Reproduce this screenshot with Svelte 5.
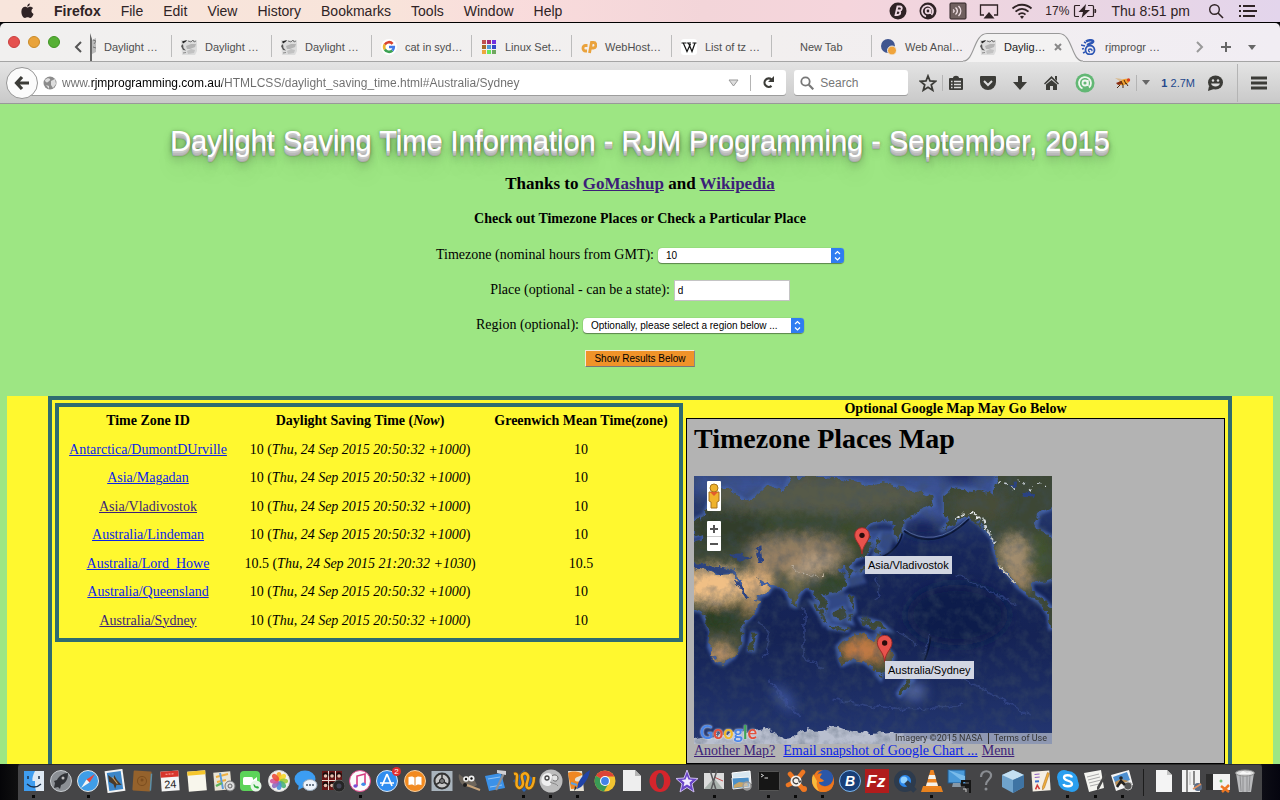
<script>
  const menus = ['File', 'Edit', 'View', 'History', 'Bookmarks', 'Tools', 'Window', 'Help'];

  const scribble = '<path d="M0 1h16v11l-2 4H1z" fill="#dcdcdc"/><path d="M1 2.500l5-1.500-1 1.500L2 4.500z" fill="#222"/><path d="M0 7l2-2 .5 4L5 11.500 2 11z" fill="#555"/><path d="M7 2l3 1 2-2 1 2 2-1" stroke="#777" fill="none"/><path d="M5 7l5-2 5 0-1 3-5 2-3 0z" fill="#b4b4b4"/><path d="M6 12l4-2 4 1-1 3-6 1z" fill="#c2c2c2"/><path d="M2 14l3-.5" stroke="#888"/>';
  const art = {
    scribble,
    google: '<circle cx="8" cy="8" r="8" fill="#fff"/><g fill="none" stroke-width="2.6"><path d="M3.8 5.6A4.8 4.8 0 0 1 11.6 4.8" stroke="#d8432f"/><path d="M3.9 10.5a4.8 4.8 0 0 1-.1-5" stroke="#edb42e"/><path d="M11.4 11.5a4.8 4.8 0 0 1-7.5-1" stroke="#3da253"/><path d="M8 8h4.8a4.8 4.8 0 0 1-1.4 3.5" stroke="#4379e8"/></g>',
    linux: '<path d="M1 1h4v4H1z" fill="#c0504d"/><path d="M6 1h4v4H6z" fill="#a22c74"/><path d="M11 1h4v4h-4z" fill="#7030e0"/><path d="M1 6h4v4H1z" fill="#a56a24"/><path d="M6 6h4v4H6z" fill="#4a98d8"/><path d="M11 6h4v4h-4z" fill="#3548c8"/><path d="M1 11h4v4H1z" fill="#eda63c"/><path d="M6 11h4v4H6z" fill="#66e85c"/><path d="M11 11h4v4h-4z" fill="#70a860"/>',
    cpanel: '<g fill="none" stroke="#eaa23c" stroke-width="2.8"><path d="M6.500 6.500H4.500a2.500 2.700 0 0 0 0 5.500H6"/><path d="M8.500 14L10.500 3.500H12.500a2.200 2.600 0 0 1 0 5.500h-2.500"/></g>',
    wiki: '<rect width="16" height="16" rx="3" fill="#fff"/><path d="M.5 4h4.500M5.500 4h4.500M11.500 4H15.500" stroke="#111"/><path d="M2.300 4l3.700 8.500L9.500 5M7.500 4l3.500 8.500L14 4" fill="none" stroke="#111" stroke-width="1.200"/>',
    piwik: '<circle cx="7" cy="7" r="7" fill="#40558f"/><circle cx="11" cy="11.500" r="4.500" fill="#f0a43c" stroke="#eee"/>',
    dragon: '<g fill="none" stroke="#2c55b4"><path d="M5 2.500c3-2 8-1.500 7 .5s-5 1-5.500 3.500" stroke-width="2.500"/><circle cx="9" cy="11" r="4.500" stroke-width="1.800"/><path d="M9 13c-2-.5-2-3 0-3s2.500 1.500 1.500 2" stroke-width="1.300"/><path d="M0 6l4 1M1 10l2-.5M2 14l2-1M3 3l2 1" stroke-width="1.500"/></g>'
  };

  const tabs = [
    { title: 'Daylight …', icon: 'scribble' },
    { title: 'Daylight …', icon: 'scribble' },
    { title: 'Daylight …', icon: 'scribble' },
    { title: 'cat in syd…', icon: 'google' },
    { title: 'Linux Set…', icon: 'linux' },
    { title: 'WebHost…', icon: 'cpanel' },
    { title: 'List of tz …', icon: 'wiki' },
    { title: 'New Tab', icon: null },
    { title: 'Web Anal…', icon: 'piwik' },
    { title: 'Daylig…', icon: 'scribble', active: true },
    { title: 'rjmprogr …', icon: 'dragon' }
  ];

  const zones = [
    { id: 'Antarctica/DumontDUrville', offset: '10', now: 'Thu, 24 Sep 2015 20:50:32 +1000' },
    { id: 'Asia/Magadan', offset: '10', now: 'Thu, 24 Sep 2015 20:50:32 +1000' },
    { id: 'Asia/Vladivostok', offset: '10', now: 'Thu, 24 Sep 2015 20:50:32 +1000', visited: true },
    { id: 'Australia/Lindeman', offset: '10', now: 'Thu, 24 Sep 2015 20:50:32 +1000' },
    { id: 'Australia/Lord_Howe', offset: '10.5', now: 'Thu, 24 Sep 2015 21:20:32 +1030' },
    { id: 'Australia/Queensland', offset: '10', now: 'Thu, 24 Sep 2015 20:50:32 +1000' },
    { id: 'Australia/Sydney', offset: '10', now: 'Thu, 24 Sep 2015 20:50:32 +1000', visited: true }
  ];

  const disc = (fill, ring = '#ddd') => `<circle cx="12" cy="12" r="10.500" fill="${fill}" stroke="${ring}"/>`;
  const petals = ['#f6a623', '#f5d72a', '#9ccb3b', '#4bb37a', '#4a90d9', '#8e6cc0', '#d4569a', '#ec4f3c']
    .map((c, i) => `<ellipse cx="12" cy="7.200" rx="2.600" ry="4.300" fill="${c}" opacity=".9" transform="rotate(${i * 45} 12 12)"/>`)
    .join('');

  const apps = [
    { run: true, art: '<rect x="2" y="2" width="20" height="20" fill="#dfe9f3"/><path d="M2 2h11c-2 4-3 7-2.500 10H13c0 4 0 7 1 10H2z" fill="#3f9df0"/><path d="M6 7v3M17 7v3" stroke="#1b2f4a" stroke-width="1.500"/><path d="M5 15c4 4 10 4 14 0" fill="none" stroke="#1b2f4a" stroke-width="1.300"/>' },
    { art: disc('#8b8f94', '#c8ccd0') + '<path d="M19 4c-5 0-9 3-11 7l-3 1 1 2-1 5 4-1 2 2 1-4c5-2 7-6 7-12z" fill="#303236"/><circle cx="14" cy="9" r="1.500" fill="#bbb"/>' },
    { run: true, art: disc('#3f9ee8', '#e6e6e6') + '<path d="M19 5l-5.500 8.500-3-3z" fill="#e8453c"/><path d="M5 19l5.500-8.500 3 3z" fill="#f4f4f4"/>' },
    { art: '<g transform="rotate(-8 12 12)"><rect x="3" y="1" width="18" height="22" fill="#f3f3f3"/><rect x="5" y="3" width="14" height="18" fill="#3c86c8"/><path d="M6 5l5 5 1-4 2 5 4 6-5-1-2 4-1-5-4-3z" fill="#4a3a2a"/><path d="M10 8l4 7" stroke="#d8a860"/></g>' },
    { art: '<g transform="rotate(4 12 12)"><rect x="3" y="2" width="18" height="20" rx="1" fill="#95622c"/><path d="M21 4v17" stroke="#5c8fa8" stroke-width="1.500"/><circle cx="12" cy="12" r="4.500" fill="none" stroke="#7c4d1e"/><circle cx="12" cy="11" r="1.500" fill="#7c4d1e"/></g>' },
    { art: '<g transform="rotate(-4 12 12)"><rect x="3" y="2" width="18" height="20" fill="#f5f5f5"/><path d="M3 2h18v6H3z" fill="#d8352c"/><path d="M8 5h8" stroke="#ffb0a8" stroke-dasharray="2 1"/><text x="12" y="19" font-size="11" font-family="Liberation Sans, sans-serif" text-anchor="middle" fill="#222">24</text></g>' },
    { art: '<g transform="rotate(-5 12 12)"><rect x="3" y="2" width="18" height="20" fill="#f8f6ec"/><path d="M3 2h18v4H3z" fill="#f6c62c"/></g>' },
    { art: '<rect x="2" y="3" width="17" height="18" fill="#e9e4d4" transform="rotate(-5 11 12)"/><path d="M4 8l12-3M5 13l9-2" stroke="#f0b040" stroke-width="2"/><path d="M8 4l3 16" stroke="#5b9de0" stroke-width="2"/><path d="M4 17l6-3" stroke="#61b45c" stroke-width="2.500"/><circle cx="18" cy="17" r="5" fill="#ddd" stroke="#777"/><circle cx="18" cy="17" r="2" fill="none" stroke="#666"/>' },
    { art: '<rect x="1" y="2" width="20" height="20" rx="4" fill="#5cd35a"/><rect x="4" y="8" width="10" height="8" rx="1.500" fill="#fff"/><path d="M14 11l4-3v8l-4-3z" fill="#fff"/><circle cx="17" cy="17" r="5.500" fill="#e8f6e8"/><path d="M14.500 15c0 3 2 5 5 4.500l.5-1.500-2-1-1 .5-1.500-2z" fill="#2fae3c"/>' },
    { art: disc('#f4f2ee', '#d8d8d8') + petals },
    { art: '<ellipse cx="11" cy="10" rx="10.500" ry="8.500" fill="#3c9df2"/><path d="M5 15l-1 6 6-3z" fill="#3c9df2"/><ellipse cx="16" cy="16" rx="7" ry="5.500" fill="#eef4fb" stroke="#9ab"/><circle cx="13" cy="16" r="1" fill="#456"/><circle cx="16" cy="16" r="1" fill="#456"/><circle cx="19" cy="16" r="1" fill="#456"/>' },
    { art: '<rect x="1" y="2" width="20" height="19" fill="#6a1616"/><path d="M1 11.500h20M7.500 2v19M14.500 2v19" stroke="#e8d8d0"/><g fill="#1c0c0c"><circle cx="4.500" cy="6" r="2.800"/><circle cx="11" cy="6" r="2.800"/><circle cx="18" cy="6" r="2.800"/><circle cx="4.500" cy="15.500" r="2.800"/><circle cx="11" cy="15.500" r="2.800"/></g><g fill="#eabfae"><circle cx="4.500" cy="7" r="1.800"/><circle cx="11" cy="7" r="1.800"/><circle cx="18" cy="7" r="1.800"/><circle cx="4.500" cy="16.500" r="1.800"/><circle cx="11" cy="16.500" r="1.800"/></g><circle cx="18" cy="17" r="6" fill="#252525" stroke="#555"/><circle cx="18" cy="17" r="2.500" fill="#445"/>' },
    { run: true, art: disc('#fafafa', '#e04a8c') + '<path d="M9 17V7l8-2v10" fill="none" stroke="#d63a80" stroke-width="1.600"/><ellipse cx="7.500" cy="17" rx="2.200" ry="1.700" fill="#7a4fd8"/><ellipse cx="15.500" cy="15.200" rx="2.200" ry="1.700" fill="#3f8be8"/>' },
    { badge: '2', art: disc('#2f8df0', '#d6e6f6') + '<path d="M12 5L7 17M12 5l5 12M5 14h14" stroke="#fff" stroke-width="1.700" fill="none"/>' },
    { art: disc('#f28a20', '#f8d0a0') + '<path d="M5.500 8c3-1 5-.5 6.500 1 1.500-1.500 3.500-2 6.500-1v8c-3-1-5-.5-6.500 1-1.500-1.500-3.500-2-6.500-1z" fill="#fff"/><path d="M12 9v8" stroke="#e08020"/>' },
    { art: '<rect x="1.500" y="2" width="21" height="20" fill="#a9b4bd"/><circle cx="12" cy="12" r="7.500" fill="#c8c8c8" stroke="#333" stroke-width="2"/><path d="M12 12V5M12 12l6 3.500M12 12l-6 3.500" stroke="#333" stroke-width="1.500"/><circle cx="12" cy="12" r="2.500" fill="#777" stroke="#222"/>' },
    { art: '<path d="M2 5l5 4c3-3 8-2 10 1l3 6c-4 3-12 3-14 0-3-2-5-7-4-11z" fill="#6e665c"/><circle cx="9" cy="10" r="2.800" fill="#f2f2f2"/><circle cx="14.500" cy="9.500" r="3" fill="#f2f2f2"/><circle cx="9" cy="10" r="1.200" fill="#111"/><circle cx="14.500" cy="9.500" r="1.200" fill="#111"/><path d="M10 16l13 5" stroke="#c6a37a" stroke-width="2"/><circle cx="8" cy="16" r="2" fill="#1c1c1c"/>' },
    { art: '<path d="M1 7l16-3 4 15-16 3z" fill="#3b91e8"/><path d="M4 10l12-2M6 18l12-2" stroke="#a8d0f8" stroke-width=".8"/><path d="M20 4L12 21" stroke="#8f8f92" stroke-width="2.200"/><path d="M13 1l9 1v4l-9-2z" fill="#d0d0d4"/>' },
    { run: true, art: '<path d="M12 1l11 11-11 11L1 12z" fill="#2a67b8"/><path d="M2 5c6-2 1 8 3 12s6 1 6-3-3-7 0-9 6 1 5 5-3 8 0 9 6-3 6-11" fill="none" stroke="#7a5010" stroke-width="3.800"/><path d="M2 5c6-2 1 8 3 12s6 1 6-3-3-7 0-9 6 1 5 5-3 8 0 9 6-3 6-11" fill="none" stroke="#f5a91c" stroke-width="2.500"/>' },
    { run: true, art: '<circle cx="12" cy="12" r="11.500" fill="#bdbdbd"/><path d="M3 8c2-5 10-5 10-1s-2 4-1 7-4 4-7 2-3-5-2-8z" fill="#f0f0f0"/><circle cx="8" cy="9" r="2" fill="none" stroke="#444" stroke-width="1.300"/><path d="M13 7c2-2 6-1 6 2s-3 4-5 2" fill="#e4e4e4" stroke="#666"/><path d="M11 13c3 2 6 1 8 4" fill="none" stroke="#888"/>' },
    { run: true, art: '<path d="M2 2h14l2 20H4z" fill="#e6e0d2"/><path d="M2 4c5-3 13-1 14 1s-6 2-7 5 4 3 6 2-1 8-10 8z" fill="#ee8722"/><path d="M5 14l6 2" stroke="#5ca0e0" stroke-width="2"/><path d="M24 1c-1 8-5 13-9 17l-4 2 1-5c2-6 7-11 12-14z" fill="#2144a8"/><path d="M11 19l-3 3 1-5z" fill="#333"/>' },
    { art: '<circle cx="12" cy="12" r="10.500" fill="#f2c331"/><path d="M12 12L2.900 6.800A10.500 10.500 0 0 1 21.300 7.500H12z" fill="#dc4437"/><path d="M12 12L2.900 6.800a10.500 10.500 0 0 0 8 15.600l4.600-8z" fill="#3a9b56"/><circle cx="12" cy="12" r="5" fill="#fff"/><circle cx="12" cy="12" r="3.900" fill="#4382e8"/>' },
    { art: '<path d="M3 1h12l6 6v15H3z" fill="#eee"/><path d="M15 1l6 6h-6z" fill="#b5b5b5"/>' },
    { art: '<ellipse cx="12" cy="12" rx="10.500" ry="11" fill="#d5252c"/><ellipse cx="12" cy="12" rx="4" ry="8" fill="#45464a"/>' },
    { art: '<path d="M12 1l3 8 8 .5-6 5.500 2 8-7-4.500L5 23l2-8-6-5.500L9 9z" fill="#6a45c8" stroke="#cdbcf0"/><path d="M12 7l1.500 3.500 4 .5-3 2.500 1 4-3.500-2-3.500 2 1-4-3-2.500 4-.5z" fill="#efe8ff"/>' },
    { run: true, art: '<rect x="2" y="4" width="20" height="16" fill="#dcdcdc"/><path d="M2 20L12 9l9 11z" fill="#aab3ae"/><path d="M12 8l9 4" stroke="#c75050"/><path d="M8 1l6 20M15 1L9 21" stroke="#58585a" stroke-width="1.500"/>' },
    { art: '<path d="M3 4l18-2 1 13-17 3z" fill="#d8e6ef" stroke="#fff"/><path d="M3 9l17-1 1 10-17 2z" fill="#4b90c8" stroke="#f6f6f6"/><path d="M5 16l5-3 8 1 1 3-14 2z" fill="#c8a668"/><circle cx="18" cy="17" r="4" fill="#ccc9" stroke="#9a9a9a" stroke-width="1.500"/>' },
    { run: true, art: '<rect x="1.500" y="2.500" width="21" height="19" rx="1" fill="#161616" stroke="#555"/><path d="M4 5l2.500 1.500L4 8M7.500 9H11" fill="none" stroke="#ddd"/>' },
    { run: true, art: '<g stroke="#ee7722" stroke-linecap="round"><path d="M12 12L19 3M12 12l-8 4M12 12l7 8M12 12L6 5" stroke-width="4.500"/></g><circle cx="20" cy="20" r="3" fill="#ee7722"/><circle cx="12" cy="12" r="5.500" fill="#f5f0ea"/><path d="M14 14a3 3 0 1 1 1-2c0 2 2 1 1.500-.5" fill="none" stroke="#444" stroke-width="1.300"/>' },
    { run: true, art: '<circle cx="12" cy="12" r="11" fill="#e9701d"/><circle cx="14" cy="9" r="8.200" fill="#2a57a8"/><path d="M8 1c-3 1-4 3-4 5L1 8c-1 7 4 15 11 15 8 0 11-5 11-12-1 4-4 7-8 7-4 0-7-2-7-5 1 0 4 0 5-1-1-2-3-2-4-3 0-2 1-3 2-4-2-1-4 0-5 1 0-2 1-4 2-5z" fill="#ee7a1e"/><path d="M2 5l-1 6c0 5 3 9 7 11-2-3-3-7-2-10z" fill="#f8bb3c"/>' },
    { art: disc('#173f78', '#7db6ee') + '<text x="12" y="17" font-size="14" font-weight="bold" font-style="italic" font-family="Liberation Sans, sans-serif" text-anchor="middle" fill="#fff">B</text>' },
    { art: '<rect x="0" y="0" width="24" height="24" fill="#b01c1c"/><text x="11" y="18" font-size="17" font-weight="bold" font-style="italic" font-family="Liberation Sans, sans-serif" text-anchor="middle" fill="#fff">Fz</text>' },
    { art: '<circle cx="12" cy="12" r="8.500" fill="#2a86ea" stroke="#2d3b4d" stroke-width="5"/><circle cx="11" cy="11" r="3.500" fill="#8fd0ff"/><path d="M13 13l9 9" stroke="#2d3b4d" stroke-width="5"/>' },
    { run: true, art: '<path d="M3 17h18l2 6H1z" fill="#e8821e"/><path d="M10.500 1h3l5 18h-13z" fill="#ef8420"/><path d="M9 6h6l1 4H8zM7 13.500h10l1 3.500H6z" fill="#f4f1ea"/>' },
    { art: '<rect x="1" y="1" width="17" height="13" fill="#4b9ad8" stroke="#20588c"/><path d="M1 1l17 6v7z" fill="#79bbea"/><path d="M6 14h7l1 4H5z" fill="#8898a6"/><path d="M15 12h8v4h-8zM18 18h5v6" fill="none" stroke="#161616" stroke-width="2"/><path d="M16 20h3v3" fill="none" stroke="#ccc"/>' },
    { art: '<path d="M7 8c0-8 11-7 10-1-.6 4-5 4-5 9" fill="none" stroke="#8a8d92" stroke-width="2.200"/><circle cx="12" cy="20" r="1.500" fill="#8a8d92"/>' },
    { art: '<path d="M12 1l11 5v12l-11 6-11-6V6z" fill="#6fa3cc"/><path d="M12 1l11 5-11 5L1 6z" fill="#c4e0f2"/><path d="M12 11v13l11-6V6z" fill="#3f74a4"/>' },
    { art: '<g transform="rotate(-4 12 12)"><rect x="3" y="2" width="18" height="20" fill="#f4efe4"/><path d="M6 5h5M6 8h5" stroke="#8b5cc0"/><path d="M6 12h4" stroke="#3b6fd0" stroke-width="2"/><path d="M6 20l2-4 2 4" fill="none" stroke="#d03838" stroke-width="1.500"/><path d="M21 5l-6 14-2 2v-3l6-14z" fill="#efae3c" stroke="#a86b1c" stroke-width=".5"/></g>' },
    { run: true, art: '<circle cx="8" cy="8" r="7" fill="#2a9ff0"/><circle cx="16" cy="16" r="7" fill="#2a9ff0"/><circle cx="12" cy="12" r="10" fill="#2a9ff0"/><path d="M16 8.500c-1-3-8-3-8 0 0 4 8 2.500 8 6.500 0 3-8 3-8.500 0" fill="none" stroke="#fff" stroke-width="2.300"/>' },
    { run: true, art: '<path d="M1 4l17-3 3 18-15 4z" fill="#f4f4f0"/><path d="M4 8l12-3M5 11l12-3M6 14l12-3M7 17l9-2" stroke="#aaa"/><path d="M24 5l-8 15-2 1v-3l8-14z" fill="#4a4a4a"/>' },
    { run: true, art: '<path d="M1 6l18-5 4 15-17 6z" fill="#f4f4f4"/><path d="M3 8l14-5 3 8-14 5z" fill="#4d8fd0"/><path d="M5 13l6-3 4 1 4 1-13 5z" fill="#b98f58"/><circle cx="18" cy="17" r="4" fill="#555" stroke="#bbb"/><path d="M7 18l4-6 4 4" stroke="#222" stroke-width="2.500" fill="none"/><circle cx="11" cy="9" r="1.800" fill="#222"/>' }
  ];

  const stacks = [
    { art: '<path d="M4 1h11l5 5v17H4z" fill="#f4f4f4"/><path d="M15 1l5 5h-5z" fill="#c4c4c4"/>' },
    { art: '<rect x="3" y="1" width="18" height="22" fill="#f2f2f2"/><path d="M8 1v22M15 2v14" stroke="#888" stroke-width="2"/><path d="M11 3v13" stroke="#bbb"/><circle cx="19" cy="18" r="4" fill="#5a6c86"/><path d="M14 20l8-5" stroke="#e0905c" stroke-width="1.500"/>' },
    { art: '<rect x="0" y="5" width="24" height="16" fill="#f2f2f2"/><path d="M0 5h7v16H0z" fill="#2c2c2c"/><circle cx="15" cy="12" r="1.500" fill="#6fbf6f"/><path d="M15 17l8 6M23 16l-7 7" stroke="#ee7722" stroke-width="2.500"/>' },
    { art: '<path d="M3 4h18l-3 19H6z" fill="#b9babc"/><ellipse cx="12" cy="4" rx="9.500" ry="3" fill="#dedede" stroke="#8a8a8a"/><path d="M7 6l1 16M10 7v16M14 7v16M17 6l-1 16" stroke="#8f9092"/><path d="M6 5l4-3 4 2 3-1 1 2z" fill="#f8f8f8"/>' }
  ];

  let timezone = $state('10');
  let place = $state('d');
  let region = $state('');
  let address = $state('www.rjmprogramming.com.au/HTMLCSS/daylight_saving_time.html#Australia/Sydney');
</script>

{#snippet arrows()}
  <svg class="arrows" viewBox="0 0 13 15" aria-hidden="true">
    <rect width="13" height="15" rx="3" fill="#2f7df2" /><path d="M0 0h5v15H0z" fill="#2f7df2" />
    <path d="M4 6l2.500-2.500L9 6M4 9.500L6.500 12 9 9.500" fill="none" stroke="#fff" stroke-width="1.200" />
  </svg>
{/snippet}

{#snippet pin(x, y)}
  <g transform="translate({x} {y})">
    <path d="M0 0C-3-30-22-38-22-57a22 22 0 0 1 44 0C22-38 3-30 0 0z" fill="#e8524c" stroke="#9c2b28" stroke-width="3" />
    <circle cy="-56" r="8" fill="#2b0c0c" />
  </g>
{/snippet}

<div class="screen">
  <header class="menubar">
    <svg class="apple" viewBox="0 0 14 16" aria-hidden="true"><path d="M9.500 0c.2 1.800-1.200 3.300-2.800 3.300C6.500 1.700 8 .2 9.500 0zM7 4.300c.8 0 1.700-.8 3-.8 1.200 0 2.300.6 3 1.600-2.500 1.500-2.200 5 .5 6-.7 2-2.200 4.400-3.700 4.400-1.100 0-1.500-.7-2.700-.7s-1.700.7-2.800.7C2.200 15.500.4 11.800.4 8.800c0-3.400 2-5.300 4-5.300 1.200 0 2 .8 2.600.8z" fill="#2f2325" /></svg>
    <nav>
      <b>Firefox</b>
      {#each menus as menu}<span>{menu}</span>{/each}
    </nav>
    <div class="status">
      <svg width="18" height="18" viewBox="0 0 18 18"><circle cx="9" cy="9" r="8.500" fill="#2f2325" /><path d="M6.500 13L8.500 4.500h2.500a1.900 1.900 0 0 1-.5 4H8c4.500-.4 4 4.500.5 4.500z" fill="none" stroke="#ecd6e0" stroke-width="1.800" /></svg>
      <svg width="18" height="18" viewBox="0 0 18 18"><circle cx="9" cy="9" r="8.500" fill="#2f2325" /><path d="M7 14.500a5.500 5.500 0 1 1 5.500-1.500" fill="none" stroke="#ecd6e0" stroke-width="1.800" /><circle cx="9" cy="9" r="2.300" fill="none" stroke="#ecd6e0" stroke-width="1.800" /><path d="M11.500 7v5" stroke="#ecd6e0" stroke-width="1.800" /></svg>
      <svg width="18" height="18" viewBox="0 0 18 18"><rect x="1" y="1" width="16" height="16" rx="1" fill="#70605f" stroke="#2f2325" /><path d="M4 7.500c1.500 1 1.500 2 0 3M6.500 5.500c2.500 2 2.500 5 0 7M9.500 4c3 3 3 7 0 10" fill="none" stroke="#f0dfe4" stroke-width="1.400" /></svg>
      <svg width="20" height="18" viewBox="0 0 20 18"><path d="M5 13H1.500V3h17v10H15" fill="none" stroke="#2f2325" stroke-width="1.300" /><path d="M10 10l5.500 6.500h-11z" fill="#2f2325" /></svg>
      <svg width="22" height="18" viewBox="0 0 22 18"><g fill="none" stroke="#2f2325" stroke-width="1.800"><path d="M1.500 6.500c5.500-5 13.500-5 19 0M4.500 9.700c4-3.600 9-3.600 13 0M7.500 12.700c2-2 5-2 7 0" /></g><path d="M11 17l-2-2.500c1.200-1 2.800-1 4 0z" fill="#2f2325" /></svg>
      <span class="charge">17%
        <svg width="24" height="14" viewBox="0 0 24 14"><path d="M7 1.500H2.500a1 1 0 0 0-1 1v9a1 1 0 0 0 1 1H6M15 1.500h4.500a1 1 0 0 1 1 1v9a1 1 0 0 1-1 1H14" fill="none" stroke="#2f2325" stroke-width="1.200" /><path d="M22 5c1 .5 1 3.500 0 4z" fill="#2f2325" stroke="#2f2325" /><path d="M13 0L5.500 8H10L8.500 14 17 6h-5z" fill="#2f2325" /></svg>
      </span>
      <time>Thu 8:51 pm</time>
      <svg width="16" height="16" viewBox="0 0 16 16"><circle cx="6.500" cy="6.500" r="4.800" fill="none" stroke="#2f2325" stroke-width="1.400" /><path d="M10 10l5 5" stroke="#2f2325" stroke-width="1.600" /></svg>
      <svg class="list" width="18" height="14" viewBox="0 0 18 14"><path d="M0 2h2M0 7h2M0 12h2M4 2h12M4 7h14M4 12h12" stroke="#2f2325" stroke-width="2" /></svg>
    </div>
  </header>

  <div class="tabstrip">
    <div class="lights"><i class="close"></i><i class="min"></i><i class="max"></i></div>
    <button class="scroll" aria-label="Scroll tabs left"><svg width="8" height="12" viewBox="0 0 8 12"><path d="M7 1L2 6l5 5" fill="none" stroke="#555" stroke-width="2" /></svg></button>
    <div class="tabs">
      {#each tabs as tab, i}
        <button class="tab" class:first={i === 0} class:active={tab.active} class:plain={!tab.icon} class:after={i > 8}>
          {#if tab.active}
            <svg class="outline" viewBox="0 0 120 30" preserveAspectRatio="none" aria-hidden="true"><path d="M0 29C12 29 10 2 24 1.500H96C110 2 108 29 120 29V30H0z" fill="#f3f2f2" /><path d="M0 29C12 29 10 2 24 1.500H96C110 2 108 29 120 29" fill="none" stroke="#999" stroke-width="1.200" /></svg>
          {/if}
          {#if i === 0}
            <svg class="edge" viewBox="0 0 6 28" aria-hidden="true"><path d="M0 0l2 6v22H0z" fill="#666" /><path d="M2 7l4-2v14l-4 2z" fill="#bbb" /><path d="M3 7l3 1-2 3M3 14l3 1" fill="none" stroke="#777" /></svg>
          {:else if tab.icon}<svg class="fav" viewBox="0 0 16 16" aria-hidden="true">{@html art[tab.icon]}</svg>{/if}
          <span>{tab.title}</span>
          {#if tab.active}<svg class="x" width="8" height="8" viewBox="0 0 8 8"><path d="M1 1l6 6M7 1L1 7" stroke="#888" stroke-width="2" /></svg>{/if}
        </button>
      {/each}
    </div>
    <div class="tabtools">
      <svg width="8" height="12" viewBox="0 0 8 12"><path d="M1 1l5 5-5 5" fill="none" stroke="#999" stroke-width="2" /></svg>
      <svg width="12" height="12" viewBox="0 0 12 12"><path d="M6 1v10M1 6h10" stroke="#666" stroke-width="2" /></svg>
      <svg width="8" height="5" viewBox="0 0 8 5"><path d="M0 0h8L4 5z" fill="#666" /></svg>
    </div>
  </div>

  <div class="toolbar">
    <button class="back" aria-label="Back"><svg width="16" height="16" viewBox="0 0 16 16"><path d="M8 2L2.500 8 8 14M3 8h12" fill="none" stroke="#3c3c38" stroke-width="3.200" /></svg></button>
    <div class="address">
      <svg width="14" height="14" viewBox="0 0 14 14"><circle cx="7" cy="7" r="6.500" fill="#8b8b8b" /><path d="M2 4c2-2 4-2 5-1s-1 2-2 3-3 0-3-2zM8 5l4-2 1 5-3 4-2-3zM3 9l3 1v3z" fill="#ddd" /></svg>
      <input class="url" aria-label="Address" bind:value={address} />
      <svg width="11" height="8" viewBox="0 0 11 8"><path d="M1 1h9L5.500 7z" fill="#ddd" stroke="#999" /></svg>
      <i class="rule"></i>
      <svg class="reload" width="13" height="13" viewBox="0 0 13 13"><path d="M9.500 9.800A4.200 4.200 0 1 1 9.500 3.500" fill="none" stroke="#3c3c38" stroke-width="2.200" /><path d="M12 0v6H6z" fill="#3c3c38" /></svg>
    </div>
    <div class="search">
      <svg width="14" height="14" viewBox="0 0 14 14"><circle cx="5.500" cy="5.500" r="4.200" fill="none" stroke="#777" stroke-width="1.800" /><path d="M8.800 8.800l4.500 4.500" stroke="#777" stroke-width="2.200" /></svg>
      <input aria-label="Search" placeholder="Search" />
    </div>
    <div class="tools">
      <svg width="18" height="18" viewBox="0 0 18 18"><path d="M9 2l2 5 5.500.4-4.200 3.500 1.400 5.300L9 13.300l-4.700 2.900 1.400-5.300L1.500 7.400 7 7z" fill="none" stroke="#3c3c38" stroke-width="1.800" /></svg>
      <i class="rule"></i>
      <svg width="16" height="16" viewBox="0 0 16 16"><path d="M1 4a1 1 0 0 1 1-1h3c0-3 6-3 6 0h3a1 1 0 0 1 1 1v10a1 1 0 0 1-1 1H2a1 1 0 0 1-1-1z" fill="#3c3c38" /><path d="M3 6.500h1.500M6 6.500h7M3 9.500h1.500M6 9.500h7M3 12.500h1.500M6 12.500h7" stroke="#dcdcdc" stroke-width="1.600" /></svg>
      <svg class="wide" width="18" height="16" viewBox="0 0 18 16"><path d="M1 2a1 1 0 0 1 1-1h14a1 1 0 0 1 1 1v5a8 8 0 0 1-16 0z" fill="#3c3c38" /><path d="M5 6l4 4 4-4" fill="none" stroke="#ddd" stroke-width="2" /></svg>
      <svg class="wide" width="16" height="16" viewBox="0 0 16 16"><path d="M6 1h4v6h5l-7 8-7-8h5z" fill="#3c3c38" /></svg>
      <svg class="wide" width="17" height="16" viewBox="0 0 17 16"><path d="M8.500 1L16 8.500l-1 1-6.500-6-6.500 6-1-1zM12 1h2v5l-2-2zM3 9.500L8.500 5 14 9.500V15h-4v-4H7v4H3z" fill="#3c3c38" /></svg>
      <svg class="wide" width="20" height="20" viewBox="0 0 20 20"><circle cx="10" cy="10" r="9.500" fill="#62b774" /><path d="M7.500 15.500a6 6 0 1 1 6.500-1" fill="none" stroke="#eef6ee" stroke-width="1.800" /><circle cx="10" cy="10" r="2.500" fill="none" stroke="#eef6ee" stroke-width="1.800" /><path d="M12.800 7v6" stroke="#eef6ee" stroke-width="1.800" /></svg>
      <svg class="bee" width="16" height="14" viewBox="0 0 16 14"><ellipse cx="9" cy="6" rx="5.500" ry="3" fill="#f0a030" transform="rotate(-18 9 6)" /><path d="M0 2l7 1-1 3z" fill="#d8b88c" /><path d="M1 7l5-2 1 3-4 1z" fill="#8a2c10" /><path d="M5 9l-3 3M8 9l0 3M11 7l2 3M9 4l2 4M6 5l2 4" stroke="#4a2408" fill="none" /><circle cx="13.500" cy="4" r="1.700" fill="#d64020" /></svg>
      <i class="rule"></i>
      <svg width="8" height="5" viewBox="0 0 8 5"><path d="M0 0h8L4 5z" fill="#666" /></svg>
      <span class="rank"><b>1</b> 2.7M</span>
      <svg width="16" height="16" viewBox="0 0 16 16"><ellipse cx="8.500" cy="7.500" rx="7.500" ry="7" fill="#3c3c38" /><path d="M2 11l-1 5 6-2z" fill="#3c3c38" /><circle cx="6" cy="5.500" r="1.200" fill="#ddd" /><circle cx="11" cy="5.500" r="1.200" fill="#ddd" /><path d="M4 8.500h9c-1 4-8 4-9 0z" fill="#ddd" /></svg>
      <i class="rule tall"></i>
      <svg width="16" height="14" viewBox="0 0 16 14"><path d="M0 2h16M0 7h16M0 12h16" stroke="#3c3c38" stroke-width="3" /></svg>
    </div>
  </div>

  <main>
    <h1>Daylight Saving Time Information - RJM Programming - September, 2015</h1>
    <h3>Thanks to <a class="visited" href="#gomashup">GoMashup</a> and <a class="visited" href="#wikipedia">Wikipedia</a></h3>
    <h4>Check out Timezone Places or Check a Particular Place</h4>
    <form onsubmit={(e) => e.preventDefault()}>
      <div class="field">
        <label for="tz">Timezone (nominal hours from GMT):</label>
        <span class="picker tz"><select id="tz" bind:value={timezone}><option value="10">10</option></select>{@render arrows()}</span>
      </div>
      <div class="field">
        <label for="place">Place (optional - can be a state):</label>
        <input id="place" bind:value={place} />
      </div>
      <div class="field">
        <label for="region">Region (optional):</label>
        <span class="picker region"><select id="region" bind:value={region}><option value="">Optionally, please select a region below ...</option></select>{@render arrows()}</span>
      </div>
      <button class="show">Show Results Below</button>
    </form>

    <section class="band">
      <div class="results">
        <table>
          <thead>
            <tr><th>Time Zone ID</th><th>Daylight Saving Time (<em>Now</em>)</th><th>Greenwich Mean Time(zone)</th></tr>
          </thead>
          <tbody>
            {#each zones as z}
              <tr>
                <td><a class:visited={z.visited} href="#{z.id}">{z.id}</a></td>
                <td>{z.offset} (<em>{z.now}</em>)</td>
                <td>{z.offset}</td>
              </tr>
            {/each}
          </tbody>
        </table>
        <div class="mapside">
          <strong>Optional Google Map May Go Below</strong>
          <div class="frame">
            <h2>Timezone Places Map</h2>
            <div class="map">
              <svg class="earth" viewBox="30 33 1074 804" role="img" aria-label="Satellite map">
                <defs>
                  <filter id="coast" x="-5%" y="-5%" width="110%" height="110%"><feTurbulence type="fractalNoise" baseFrequency=".045" numOctaves="4" seed="7" result="n" /><feDisplacementMap in="SourceGraphic" in2="n" scale="26" xChannelSelector="R" yChannelSelector="G" /></filter>
                  <filter id="soft" x="-50%" y="-50%" width="200%" height="200%"><feGaussianBlur stdDeviation="18" /></filter>
                  <filter id="shelf" x="-10%" y="-10%" width="120%" height="120%"><feGaussianBlur stdDeviation="5" /></filter>
                  <filter id="grain" x="0" y="0" width="100%" height="100%"><feTurbulence type="fractalNoise" baseFrequency=".03" numOctaves="5" seed="3" /><feColorMatrix values="0 0 0 0 .05  0 0 0 0 .08  0 0 0 0 .12  1.800 0 0 0 -.7" /></filter>
                  <linearGradient id="sea" x1="0" y1="0" x2="0" y2="1"><stop offset="0" stop-color="#31477f" /><stop offset=".28" stop-color="#16255a" /><stop offset=".6" stop-color="#152355" /><stop offset="1" stop-color="#243772" /></linearGradient>
                  <path id="eurasia" d="M10 290V240L60 225 52 180 62 145 95 65 130 70 150 85 190 110 230 80 250 60 300 80 315 45 330 25 345 40 400 35 470 42 560 62 600 52 680 75 745 95 750 120 715 130 690 150 660 165 655 200 640 225 632 205 635 175 600 165 560 175 540 190 555 215 560 245 545 270 515 285 500 300 512 325 495 332 482 305 462 312 485 340 490 360 475 375 440 385 412 385 430 410 425 440 408 425 395 395 385 375 365 365 345 390 335 425 322 420 310 385 295 365 255 358 235 345 215 340 235 360 262 368 250 385 195 408 180 375 160 330 150 312 110 310 60 295z" />
                  <path id="africa" d="M10 305L70 315 100 330 150 328 165 355 190 402 225 408 215 440 175 480 175 530 150 575 120 597 95 590 75 545 80 500 62 460 55 440 10 430z" />
                  <path id="america" d="M780 90L805 70 870 75 925 90 940 25 1140 20V115L1065 145 1055 190 1140 235V330L1085 350 1040 350 1045 380 1075 400 1104 430 1140 430V480L1098 490 1094 450 1070 415 1030 388 1000 365 975 330 945 300 930 255 925 220 890 180 850 152 815 175 770 198 800 165 780 150z" />
                  <path id="oz" d="M460 545L480 525 500 518 512 508 545 506 550 520 575 528 582 500 600 540 628 570 622 605 595 625 570 612 540 590 510 585 475 600 468 585z" />
                  <path id="isles" d="M385 415l12 5 35 48-10 5zM445 440l35-12 5 20-18 18-20-6zM435 482l55 8v6l-55-8zM490 450l15-4-8 12 6 16-9-3zM495 395l12 4 4 35-10-8zM530 462l30 4 30 8 25 22-20-2-35-8-20-8zM585 215l-8 35-6-20zM580 250l12 8-10 10-8-6zM570 270l6 20-22 25-24 8-2-8 28-15zM205 505l12 2-8 50-14-2zM30 165l20-10 10 50-30 10zM580 630h15l-5 12zM672 640l15 5-18 25-22 22-5-6z" />
                  <clipPath id="land"><use href="#eurasia" /><use href="#africa" /><use href="#america" /><use href="#oz" /><use href="#isles" /></clipPath>
                </defs>
                <rect x="30" y="33" width="1074" height="804" fill="url(#sea)" />
                <g fill="#40569b" filter="url(#soft)"><path d="M30 33h1074v50L780 95l-70 40 60 70-60-10-40-20-640-90z" opacity=".8" /><path d="M640 130l130-20 30 70-60-20-60-20z" /><ellipse cx="830" cy="35" rx="55" ry="20" fill="#12235b" /><ellipse cx="715" cy="185" rx="50" ry="28" fill="#13245a" /><ellipse cx="300" cy="700" rx="48" ry="18" transform="rotate(50 300 700)" /><ellipse cx="690" cy="680" rx="34" ry="24" fill="#5c6fb0" /><ellipse cx="820" cy="450" rx="150" ry="90" fill="#101d4c" /></g>
                <g fill="none" stroke="#40549c" opacity=".5" stroke-width="5" filter="url(#coast)"><path d="M225 470q60 60 10 110M360 430v150l60 30M575 340q20 50 0 70M640 500q60 30 60 50M740 510l-20 60M250 640l100 120M800 620l240 130M820 330l180 90M440 700q200 50 400 20" /></g>
                <g fill="#4360a6" stroke="#4360a6" stroke-width="12" filter="url(#shelf)"><use href="#eurasia" /><use href="#africa" /><use href="#america" /><use href="#oz" /><use href="#isles" /><path d="M390 390l90 0 20 80-80 10zM560 200h70l-20 60-30 10zM480 330l40-20 20 40-40 10zM500 510h80v20z" opacity=".6" /></g>
                <path d="M660 198q40 30 90 24t105-60M655 205q-10 50-70 75M740 515q-5 40-18 70" fill="none" stroke="#091435" stroke-width="5" />
                <path d="M660 192q40 30 90 24t105-60" fill="none" stroke="#6d83bb" stroke-width="2" />
                <g filter="url(#coast)">
                  <g clip-path="url(#land)">
                    <rect x="0" y="0" width="1150" height="850" fill="#3c4736" />
                    <g filter="url(#soft)">
                      <ellipse cx="400" cy="90" rx="340" ry="60" fill="#565a48" /><ellipse cx="300" cy="170" rx="200" ry="30" fill="#39472f" /><ellipse cx="140" cy="190" rx="110" ry="50" fill="#303d2b" />
                      <ellipse cx="350" cy="255" rx="160" ry="45" fill="#8d7a60" /><ellipse cx="375" cy="305" rx="90" ry="36" fill="#b59c7f" /><ellipse cx="270" cy="285" rx="80" ry="40" fill="#9a8162" />
                      <ellipse cx="85" cy="360" rx="125" ry="56" fill="#f0bf85" /><ellipse cx="220" cy="360" rx="52" ry="44" fill="#e6b47b" />
                      <ellipse cx="110" cy="460" rx="70" ry="38" fill="#2c3e21" /><ellipse cx="110" cy="565" rx="44" ry="34" fill="#c09468" /><ellipse cx="205" cy="425" rx="34" ry="18" fill="#bd9262" />
                      <ellipse cx="330" cy="370" rx="25" ry="40" fill="#77704a" /><ellipse cx="440" cy="350" rx="50" ry="40" fill="#33452a" /><ellipse cx="510" cy="215" rx="40" ry="45" fill="#3a4c2b" />
                      <ellipse cx="540" cy="555" rx="75" ry="40" fill="#c17a45" /><ellipse cx="535" cy="510" rx="45" ry="10" fill="#5c5c35" /><ellipse cx="620" cy="600" rx="20" ry="25" fill="#59633c" />
                      <ellipse cx="890" cy="120" rx="90" ry="50" fill="#464d39" /><ellipse cx="990" cy="270" rx="50" ry="65" fill="#a28d6e" /><ellipse cx="1070" cy="270" rx="35" ry="70" fill="#43532f" /><ellipse cx="1015" cy="345" rx="34" ry="24" fill="#b2926a" />
                    </g>
                  </g>
                  <path d="M820 160q40-35 75 10l35 60" fill="none" stroke="#e6e9ea" stroke-width="8" stroke-dasharray="12 5" /><path d="M320 300q40 45 100 30" fill="none" stroke="#cfc4b4" stroke-width="3" stroke-dasharray="14 6" /><path d="M945 300l45 60" stroke="#d8cfb8" stroke-width="4" />
                  <path d="M135 275q25-20 65 2l-20 10zM215 250l14-6 8 50-12 2zM150 345l8-4 40 60-8 5zM20 290l60 8 60 22-20 8-45-12-55-8zM1010 85l30-10 10 20-30 6zM975 60l20-8 4 14z" fill="#2b4384" />
                  <path d="M10 860V825L80 815 200 795 240 790 320 825 345 800 370 790 400 800 450 785 500 795 560 808 620 800 680 820 800 825V860z" fill="#b9bfcf" />
                  <path d="M940 50l60 20M1000 45l50 30M1060 50l35 20" stroke="#d7dce4" stroke-width="5" stroke-dasharray="8 14" />
                </g>
                <rect x="30" y="33" width="1074" height="804" filter="url(#grain)" opacity=".45" />
                {@render pin(534, 267)}
                {@render pin(602, 590)}
              </svg>
              <div class="pegman"><svg width="12" height="26" viewBox="0 0 12 26"><path d="M1 9h10v9l-2 1v6H3v-6l-2-1z" fill="#f0b32c" stroke="#a8741c" /><circle cx="6" cy="5" r="4" fill="#f0b32c" stroke="#a8741c" /><path d="M2 9h8l-4 4z" fill="#e25c2c" /></svg></div>
              <div class="zoomer"><button aria-label="Zoom in"><svg width="8" height="8" viewBox="0 0 8 8"><path d="M4 0v8M0 4h8" stroke="#555" stroke-width="2" /></svg></button><button aria-label="Zoom out"><svg width="8" height="8" viewBox="0 0 8 8"><path d="M0 4h8" stroke="#555" stroke-width="2" /></svg></button></div>
              <span class="tip vlad">Asia/Vladivostok</span>
              <span class="tip syd">Australia/Sydney</span>
              <span class="logo"><i class="blue">G</i><i class="red">o</i><i class="gold">o</i><i class="blue">g</i><i class="green">l</i><i class="red">e</i></span>
              <div class="credits"><span>Imagery ©2015 NASA</span><span>Terms of Use</span></div>
            </div>
            <p class="links"><a class="visited" href="#map">Another Map?</a><a href="#email">Email snapshot of Google Chart ...</a><a class="visited" href="#menu">Menu</a></p>
          </div>
        </div>
      </div>
    </section>
  </main>

  <footer>
    <div class="dock">
      {#each apps as app}
        <span class="app" class:run={app.run}><svg viewBox="0 0 24 24" aria-hidden="true">{@html app.art}</svg>{#if app.badge}<b>{app.badge}</b>{/if}</span>
      {/each}
      <i class="divider"></i>
      {#each stacks as app}
        <span class="app"><svg viewBox="0 0 24 24" aria-hidden="true">{@html app.art}</svg></span>
      {/each}
    </div>
  </footer>
</div>

<style>
  :global(body) { background: #0c0c10; overflow: hidden; }
  .screen { height: 100vh; display: flex; flex-direction: column; font-family: "Liberation Sans", Arial, sans-serif; }
  svg { display: block; flex: none; }
  button, input, select { font-family: "Liberation Sans", Arial, sans-serif; margin: 0; }

  .menubar { flex: none; height: 22px; display: flex; align-items: center; padding: 0 23px 0 21px; font-size: 14px; color: #2f2325; border-bottom: 1px solid #000; background: linear-gradient(90deg, #f8e5dc 0, #f8e4da 30%, #f9dcdc 40%, #f3d5d9 55%, #f5d5dc 66%, #e9d5e3 85%, #e3d5ec 100%); }
  .apple { width: 13px; height: 16px; margin-right: 20px; }
  .menubar nav { display: flex; gap: 20px; flex: 1; }
  .status { display: flex; align-items: center; gap: 12px; }
  .charge { display: flex; align-items: center; gap: 4px; font-size: 12px; }
  .status time { white-space: nowrap; margin: 0 6px 0 2px; }
  .status .list { margin-left: 3px; }

  .tabstrip { flex: none; height: 39px; display: flex; align-items: stretch; background: linear-gradient(90deg, #f1f0ef, #f2efef 60%, #f1edf3); border-radius: 5px 5px 0 0; box-shadow: inset 0 -1px #a5a5a5; }
  .lights { display: flex; gap: 8px; padding: 13px 0 0 8px; }
  .lights i { width: 12px; height: 12px; border-radius: 6px; box-sizing: border-box; border: 1px solid #c9403f; background: #e5524f; }
  .lights .min { background: #e9a33b; border-color: #c98a28; }
  .lights .max { background: #57b035; border-color: #3f9423; }
  .scroll { border: 0; background: none; padding: 8px 0 0; margin-left: 14px; width: 16px; }
  .tabs { flex: 1; display: flex; align-items: flex-end; min-width: 0; }
  .tab { flex: 0 1 100px; min-width: 0; height: 28px; margin-bottom: 1px; border: 0; padding: 0 0 0 10px; display: flex; align-items: center; gap: 8px; font-size: 11px; color: #4e4e4e; white-space: nowrap; position: relative; background: linear-gradient(#bcbcbc, #bcbcbc) left 2px / 1px 22px no-repeat; }
  .tab.first { flex-basis: 81px; padding: 0; overflow: hidden; background: none; }
  .edge { width: 6px; height: 28px; }
  .tab.after { background: none; }
  .tab.plain { padding-left: 29px; }
  .tab.active { height: 30px; margin-bottom: 0; color: #1c1c1c; padding-left: 9px; }
  .tab span, .fav, .x { position: relative; }
  .outline { position: absolute; left: -8px; top: 0; width: 120px; height: 30px; }
  .fav { width: 16px; height: 16px; }
  .tabtools { display: flex; align-items: center; gap: 16px; padding: 9px 24px 0 0; }

  .toolbar { flex: none; height: 42px; box-sizing: border-box; display: flex; align-items: center; padding: 0 13px 0 6px; border-bottom: 1px solid #999; background: linear-gradient(#e4e4e4, #c9c9c9); }
  .back { width: 32px; height: 32px; box-sizing: border-box; border-radius: 16px; border: 1px solid #969696; background: #fbfbfb; padding: 0; display: grid; place-items: center; position: relative; flex: none; }
  .address { flex: 1; height: 25px; background: #fff; margin-left: -8px; padding: 0 11px 0 13px; display: flex; align-items: center; gap: 5px; border-radius: 0 3px 3px 0; box-shadow: 0 1px #9d9d9d; }
  .url { flex: 1; min-width: 0; border: 0; outline: 0; padding: 0; height: 20px; font-size: 12px; color: #6d6d6d; background: linear-gradient(90deg, #6d6d6d 29px, #000 29px, #000 160px, #6d6d6d 160px); -webkit-background-clip: text; background-clip: text; -webkit-text-fill-color: transparent; }
  .rule { width: 1px; height: 16px; background: #b4b4b4; }
  .rule.tall { height: 38px; margin: 0 8px 0 9px; }
  .address .rule { margin: 0 6px; }
  .search { width: 114px; box-sizing: border-box; height: 25px; margin-left: 8px; padding: 0 6px; display: flex; align-items: center; gap: 6px; background: #fff; border-radius: 3px; box-shadow: 0 1px #9d9d9d; }
  .search input { border: 0; outline: 0; min-width: 0; flex: 1; padding: 0; font-size: 12px; background: none; }
  .search input::placeholder { color: #777; opacity: 1; }
  .tools { display: flex; align-items: center; gap: 5px; margin-left: 11px; }
  .tools .wide { margin-left: 10px; }
  .tools .bee { margin-left: 15px; }
  .rank { font-size: 11px; color: #24488c; margin: 0 7px 0 6px; white-space: nowrap; }

  main { flex: 1; min-height: 0; overflow: hidden; background: #9de683; padding: 19px 7px 0; color: #000; font-family: "Liberation Serif", "Times New Roman", serif; font-size: 14px; display: flex; flex-direction: column; align-items: center; }
  a { color: #0b24e8; }
  a.visited { color: #3c1f78; }
  h1, h2, h3, h4 { margin: 0; flex: none; }
  h1 { font-family: "Liberation Sans", Arial, sans-serif; font-weight: normal; font-size: 29px; line-height: 36px; color: #fff; text-shadow: 0 1px 0 #ccc, 0 2px 0 #c9c9c9, 0 3px 0 #bbb, 0 4px 0 #b9b9b9, 0 5px 0 #aaa, 0 6px 1px #0000001a, 0 0 5px #0000001a, 0 1px 3px #0000004d, 0 3px 5px #00000033, 0 5px 10px #00000040, 0 10px 10px #00000026, 0 20px 20px #0000001a; }
  h3 { font-size: 17px; line-height: 20px; margin-top: 15px; }
  h4 { font-size: 14px; line-height: 18px; margin-top: 16px; }
  form { display: flex; flex-direction: column; align-items: center; gap: 15px; margin-top: 17px; flex: none; }
  .field { display: flex; align-items: center; gap: 4px; height: 20px; }
  .picker { display: inline-grid; align-items: center; }
  .picker.tz { width: 186px; }
  .picker.region { width: 221px; }
  .picker select { grid-area: 1 / 1; appearance: none; width: 100%; height: 15px; border: 0; border-radius: 4px; background: #fff; padding: 0 8px; font-size: 10px; line-height: 15px; color: #000; box-shadow: 0 1px 1px #0006, 0 0 1px #0006; }
  .arrows { grid-area: 1 / 1; justify-self: end; width: 13px; height: 15px; pointer-events: none; position: relative; }
  #place { box-sizing: border-box; width: 116px; height: 21px; border: 1px solid #c4c4c4; background: #fff; font-size: 10px; padding: 0 3px; }
  .show { box-sizing: border-box; width: 110px; height: 17px; padding: 0; font-size: 10px; line-height: 13px; background: #f09329; color: #000; border: 1px solid; border-color: #f4ead8 #888 #777 #f4ead8; }

  .band { align-self: stretch; flex: 1; min-height: 0; margin-top: 29px; padding: 0 41px; background: #fff82f; display: flex; }
  .results { flex: 1; border: 4px solid #2f6c70; border-bottom: 0; padding: 3px 3px 0; display: flex; align-items: flex-start; gap: 3px; min-width: 0; }
  table { flex: none; border: 4px solid #2f6c70; border-spacing: 0; padding-bottom: 3px; text-align: center; white-space: nowrap; width: 628px; }
  th, td { padding: 0; height: 28px; }
  tbody tr:nth-child(odd) td { height: 29px; }
  th:first-child, td:first-child { width: 178px; }
  th:nth-child(2), td:nth-child(2) { width: 246px; }
  .mapside { flex: 1; align-self: stretch; min-width: 0; display: flex; flex-direction: column; text-align: center; line-height: 15px; margin-top: -2px; }
  .frame { flex: 1; border: 1px solid #000; margin-top: 2px; background: #b3b3b3; text-align: left; padding: 4px 7px 0; }
  h2 { font-size: 28px; line-height: 32px; }
  .map { position: relative; width: 358px; height: 268px; margin-top: 21px; font-family: "Liberation Sans", Arial, sans-serif; }
  .earth { width: 100%; height: 100%; }
  .pegman { position: absolute; left: 13px; top: 5px; width: 14px; height: 30px; background: #fff; border-radius: 1px; display: grid; place-items: center; }
  .zoomer { position: absolute; left: 13px; top: 45px; width: 14px; background: #fff; border-radius: 1px; }
  .zoomer button { width: 14px; height: 15px; border: 0; padding: 0; background: none; display: grid; place-items: center; }
  .zoomer button + button { border-top: 1px solid #ccc; }
  .tip { position: absolute; background: #d2d6e2; color: #000; font-size: 11px; line-height: 18px; padding: 0 3px; white-space: nowrap; }
  .vlad { left: 171px; top: 80px; }
  .syd { left: 191px; top: 185px; }
  .logo { position: absolute; left: 6px; bottom: 1px; font-family: Lato, sans-serif; font-weight: bold; font-size: 18px; line-height: 22px; text-shadow: 0 0 2px #fff; }
  .logo i { font-style: normal; }
  .blue { color: #4a86ea; }
  .red { color: #e2503e; }
  .gold { color: #f0b92f; }
  .green { color: #3fa458; }
  .credits { position: absolute; right: 0; bottom: 0; display: flex; background: #a9b0c3cc; color: #333; font: 9px/11px Roboto, sans-serif; }
  .credits span { padding: 0 5px; }
  .credits span + span { border-left: 1px solid #333; }
  .links { margin: 0; display: flex; gap: 4px; line-height: 14px; white-space: nowrap; }
  .links a:first-child { margin-right: 4px; }

  footer { flex: none; height: 36px; padding: 0 18px; background: linear-gradient(90deg, #050508, #141414 2%, #101018 98%, #05050f); }
  .dock { height: 36px; background: #454547; box-sizing: border-box; padding: 0 3px 0 2px; display: flex; box-shadow: inset 0 1px #2a2a2a; border-radius: 3px 3px 0 0; }
  .app { flex: 1; min-width: 0; position: relative; display: flex; flex-direction: column; align-items: center; padding-top: 5px; gap: 2px; }
  .app svg { width: 24px; height: 24px; }
  .app.run::after { content: ""; width: 3px; height: 3px; background: #0a0a0a; }
  .app b { position: absolute; right: 0; top: 3px; width: 9px; height: 9px; border-radius: 5px; background: #e22c2c; color: #fff; font: 8px/9px "Liberation Sans", sans-serif; text-align: center; }
  .divider { width: 1px; height: 27px; margin: 5px 6px 0 7px; background: #1c1c1c; }
</style>
